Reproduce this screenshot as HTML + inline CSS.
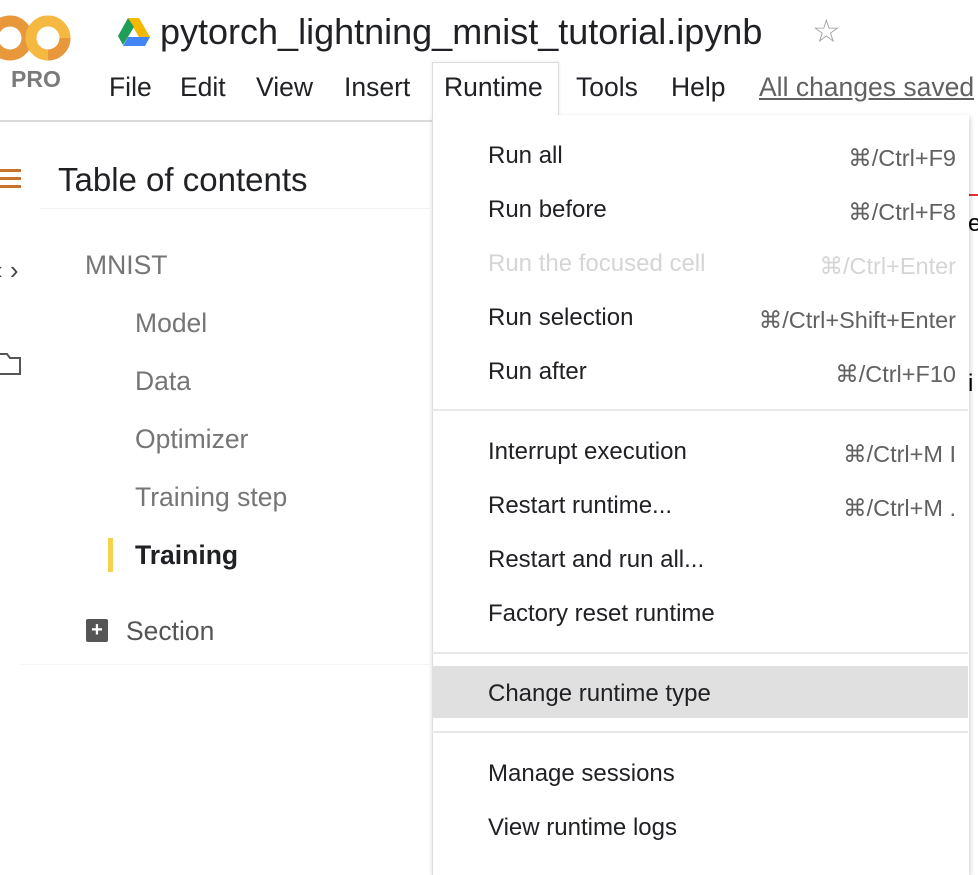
<!DOCTYPE html>
<html><head><style>
body{margin:0;width:978px;height:866px;overflow:hidden;background:#fff;font-family:"Liberation Sans",Arial,sans-serif;position:relative}
.a{position:absolute;white-space:nowrap}
.mb{font-size:26.5px;color:#202124;top:72px}
.toc{font-size:26.5px;color:#757575}
.mi{position:absolute;left:488px;font-size:24px;color:#202124;white-space:nowrap}
.sc{position:absolute;right:22px;font-size:23.5px;color:#616161;white-space:nowrap}
.sep{position:absolute;left:432px;width:536px;height:2px;background:#e8e8e8}
</style></head><body>
<svg class="a" style="left:-8px;top:12px" width="84" height="52"><circle cx="18" cy="26" r="17" fill="none" stroke="#e8973a" stroke-width="11"/><circle cx="56" cy="26" r="17" fill="none" stroke="#f5b942" stroke-width="11"/><path d="M56 43 A17 17 0 0 0 73 26" fill="none" stroke="#e8973a" stroke-width="11"/></svg>
<div class="a" style="left:11px;top:66px;font-size:23px;color:#7a7a7a;font-weight:bold">PRO</div>
<svg class="a" style="left:118px;top:18px" width="32" height="28"><polygon points="10,0 21,0 32,19 26,28" fill="#f5b800"/><polygon points="10,0 0,18 5,27 16,9" fill="#1e9e57"/><polygon points="5,28 27,28 32,19 10,19" fill="#4285f4"/></svg>
<div class="a" style="left:160px;top:11px;font-size:36px;color:#202124">pytorch_lightning_mnist_tutorial.ipynb</div>
<div class="a" style="left:812px;top:12px;font-size:32px;color:#9e9e9e">☆</div>
<div class="a mb" style="left:109px">File</div>
<div class="a mb" style="left:180px">Edit</div>
<div class="a mb" style="left:256px">View</div>
<div class="a mb" style="left:344px">Insert</div>
<div class="a mb" style="left:576px">Tools</div>
<div class="a mb" style="left:671px">Help</div>
<div class="a mb" style="left:759px;color:#616161;text-decoration:underline">All changes saved</div>
<div class="a" style="left:0;top:120px;width:432px;height:2px;background:#dadada"></div>
<div class="a" style="left:0;top:169px;width:21px;height:3px;background:#c9742b;box-shadow:0 8px 0 #c9742b,0 16px 0 #c9742b"></div>
<div class="a" style="left:58px;top:161px;font-size:33px;color:#202124">Table of contents</div>
<div class="a" style="left:40px;top:208px;width:390px;height:1px;background:#f3f3f3"></div>
<div class="a" style="left:-6px;top:255px;font-size:26px;color:#444">‹ ›</div>
<svg class="a" style="left:-2px;top:352px" width="26" height="24"><path d="M1 2 H9 L12 6 H22 V22 H1 Z" fill="none" stroke="#555" stroke-width="2"/></svg>
<div class="a toc" style="left:85px;top:250px">MNIST</div>
<div class="a toc" style="left:135px;top:308px">Model</div>
<div class="a toc" style="left:135px;top:366px">Data</div>
<div class="a toc" style="left:135px;top:424px">Optimizer</div>
<div class="a toc" style="left:135px;top:482px">Training step</div>
<div class="a" style="left:108px;top:538px;width:5px;height:34px;background:#f5d24a"></div>
<div class="a toc" style="left:135px;top:540px;color:#202124;font-weight:bold">Training</div>
<div class="a" style="left:86px;top:619px;width:22px;height:23px;background:#555;border-radius:2px;color:#fff;font-size:20px;line-height:23px;text-align:center;font-weight:bold">+</div>
<div class="a toc" style="left:126px;top:616px;color:#555">Section</div>
<div class="a" style="left:20px;top:664px;width:410px;height:1px;background:#f5f5f5"></div>
<div class="a" style="left:968px;top:194px;width:10px;height:2px;background:#d33"></div>
<div class="a" style="left:968px;top:210px;font-size:24px">e</div>
<div class="a" style="left:968px;top:370px;font-size:24px">i</div>
<div class="a" style="left:432px;top:62px;width:125px;height:54px;background:#fff;border:1px solid #ddd;border-bottom:none;box-shadow:0 0 3px rgba(0,0,0,.1)"></div>
<div class="a mb" style="left:444px">Runtime</div>
<div class="a" style="left:432px;top:115px;width:536px;height:760px;background:#fff;border-left:1px solid #ddd;box-shadow:1px 2px 5px rgba(0,0,0,.2)"></div>
<div class="a" style="left:433px;top:113px;width:123px;height:4px;background:#fff"></div>
<div class="mi" style="top:142px">Run all</div><div class="sc" style="top:144px">⌘/Ctrl+F9</div>
<div class="mi" style="top:196px">Run before</div><div class="sc" style="top:198px">⌘/Ctrl+F8</div>
<div class="mi" style="top:250px;color:#d5d5d5">Run the focused cell</div><div class="sc" style="top:252px;color:#d5d5d5">⌘/Ctrl+Enter</div>
<div class="mi" style="top:304px">Run selection</div><div class="sc" style="top:306px">⌘/Ctrl+Shift+Enter</div>
<div class="mi" style="top:358px">Run after</div><div class="sc" style="top:360px">⌘/Ctrl+F10</div>
<div class="sep" style="top:409px"></div>
<div class="mi" style="top:438px">Interrupt execution</div><div class="sc" style="top:440px">⌘/Ctrl+M I</div>
<div class="mi" style="top:492px">Restart runtime...</div><div class="sc" style="top:494px">⌘/Ctrl+M .</div>
<div class="mi" style="top:546px">Restart and run all...</div>
<div class="mi" style="top:600px">Factory reset runtime</div>
<div class="sep" style="top:652px"></div>
<div class="a" style="left:432px;top:666px;width:536px;height:52px;background:#e0e0e0"></div>
<div class="mi" style="top:680px">Change runtime type</div>
<div class="sep" style="top:731px"></div>
<div class="mi" style="top:760px">Manage sessions</div>
<div class="mi" style="top:814px">View runtime logs</div>
</body></html>
